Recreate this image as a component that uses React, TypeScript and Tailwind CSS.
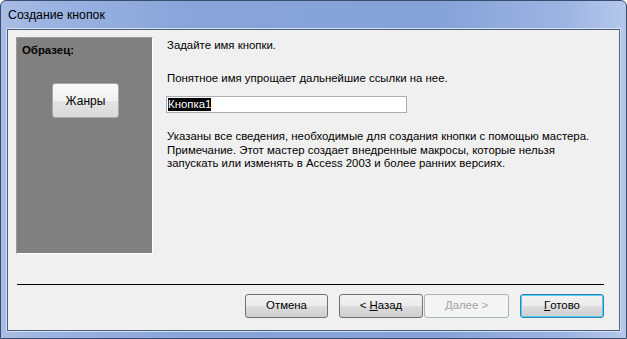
const ui = { fontFamily: '"Liberation Sans", Arial, sans-serif' }

function DlgButton({
  children,
  disabled,
  primary,
  className = '',
}: {
  children: React.ReactNode
  disabled?: boolean
  primary?: boolean
  className?: string
}) {
  const border = disabled
    ? 'border-[#adb2b5]'
    : primary
      ? 'border-[#3c7fb1] shadow-[inset_0_0_0_1px_#48d2f8]'
      : 'border-[#707070]'
  const bg = disabled
    ? 'bg-[#f4f4f4] text-[#a3a3a3]'
    : 'bg-[linear-gradient(to_bottom,#f2f2f2_0%,#ebebeb_50%,#dddddd_51%,#cfcfcf_100%)] text-black'
  return (
    <div
      className={`flex h-[24px] items-center justify-center rounded-[3px] border text-[11.4px] ${border} ${bg} ${className}`}
    >
      {children}
    </div>
  )
}

export default function App() {
  return (
    <div
      style={ui}
      className="flex h-[339px] w-[627px] flex-col overflow-hidden rounded-t-[6px] border border-[#3b4d6e] bg-[linear-gradient(to_right,#a9bee6_0%,#9bb3e1_8%,#88a4d9_30%,#85a2d8_70%,#9cb4e2_90%,#b5c8ec_100%)] px-[6px] pb-[7px]"
    >
      <div className="flex h-[28px] items-center pl-[1px] text-[12.3px] text-black">
        Создание кнопок
      </div>

      <div className="flex flex-1 flex-col border border-[#4e5f7c] bg-[#f0f0f0] shadow-[0_0_0_1px_#d6e0f2]">
        <div className="flex pl-[8px] pt-[7px]">
          <div className="flex h-[217px] w-[137px] flex-col border border-b-white border-l-[#9a9a9a] border-r-white border-t-[#9a9a9a] bg-[#808080]">
            <div className="pl-[5px] pt-[6px] text-[11.4px] font-bold leading-[13px] text-black">
              Образец:
            </div>
            <div className="ml-[35px] mt-[26px] flex h-[35px] w-[67px] items-center justify-center rounded-[3px] border border-[#a8a8a8] bg-[linear-gradient(to_bottom,#fafafa_0%,#f2f2f2_50%,#e4e4e4_51%,#dadada_100%)] text-[12px] text-black">
              Жанры
            </div>
          </div>

          <div className="ml-[14px] flex flex-col pt-[2px] text-[11.4px] leading-[13px] text-black">
            <div>Задайте имя кнопки.</div>
            <div className="mt-[20px]">Понятное имя упрощает дальнейшие ссылки на нее.</div>
            <div className="-ml-[1px] mt-[11px] flex h-[17px] w-[241px] items-center border border-[#abadb3] bg-white pl-[1px]">
              <span className="bg-black leading-[13px] text-white">Кнопка1</span>
            </div>
            <div className="mt-[17px] w-[440px] leading-[13.5px]">
              Указаны все сведения, необходимые для создания кнопки с помощью мастера.
              <br />
              Примечание. Этот мастер создает внедренные макросы, которые нельзя
              <br />
              запускать или изменять в Access 2003 и более ранних версиях.
            </div>
          </div>
        </div>

        <div className="ml-[9px] mr-[15px] mt-[30px] h-px bg-black" />

        <div className="mr-[15px] mt-[9px] flex justify-end">
          <DlgButton className="w-[83px]">Отмена</DlgButton>
          <DlgButton className="ml-[11px] w-[84px]">
            &lt; <span className="ml-[3px] underline">Н</span>азад
          </DlgButton>
          <DlgButton disabled className="ml-[1px] w-[85px]">
            <span className="underline">Д</span>алее &gt;
          </DlgButton>
          <DlgButton primary className="ml-[11px] w-[84px]">
            <span className="underline">Г</span>отово
          </DlgButton>
        </div>
      </div>
    </div>
  )
}
